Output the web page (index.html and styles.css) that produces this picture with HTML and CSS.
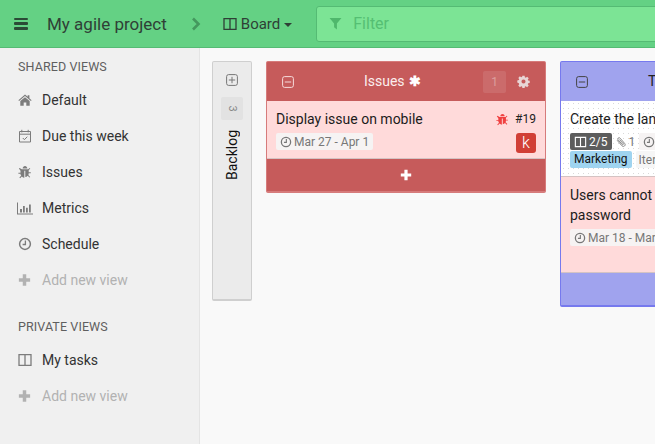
FILE: index.html
```html
<!DOCTYPE html>
<html lang="en">
<head>
<meta charset="utf-8">
<title>My agile project</title>
<link rel="stylesheet" href="styles.css">
</head>
<body>
<svg class="defs" width="0" height="0" aria-hidden="true">
  <symbol id="i-board" viewBox="0 0 14 14"><path fill="none" stroke="currentColor" stroke-width="1.3" d="M1 1.650h12v10.700H1zM7 1.650v10.700"/></symbol>
  <symbol id="i-home" viewBox="0 0 14 14"><path fill="currentColor" d="M7 1.600 .4 7.200l.7.8L7 3.100 12.900 8l.7-.8-2.200-1.900V2.200H9.700v1.600zM2.300 8.100v4.600h3.400V9.600h2.600v3.100h3.400V8.100L7 4.300z"/></symbol>
  <symbol id="i-cal" viewBox="0 0 14 14"><path fill="none" stroke="currentColor" d="M1.500 2.500h11v10.500h-11zM1.500 5.200h11M3.800.8v2.600M10.200.8v2.600M4.800 9l1.600 1.700 2.900-3"/></symbol>
  <symbol id="i-bug" viewBox="0 0 14 14"><path fill="currentColor" d="M4.600 3.400C4.800 1.900 5.800 1 7 1s2.200.9 2.400 2.400zM3.800 4.300h6.400l1.400-1.400.7.7-1.600 1.600v2h2.100v1h-2.100c0 .7-.1 1.300-.4 1.800l1.900 1.900-.7.7-1.800-1.800c-.7.8-1.500 1.200-2.400 1.300V5.800H6.300v6.900c-.9-.1-1.700-.5-2.400-1.300l-1.800 1.800-.7-.7 1.900-1.900C2.600 10 2.500 9.400 2.500 8.700H.4v-1h2.100v-2L.9 3.600l.7-.7z"/></symbol>
  <symbol id="i-chart" viewBox="0 0 16 14"><path fill="currentColor" d="M0 1.500h1v10.900h15v1H0zM3 8h2v3.500H3zM6 5h1.800v6.500H6zM9 6.800h1.800v4.700H9zM12 3.500h1.800v8H12z"/></symbol>
  <symbol id="i-clock" viewBox="0 0 14 14"><circle cx="7" cy="7" r="5.400" fill="none" stroke="currentColor" stroke-width="1.500"/><path fill="none" stroke="currentColor" stroke-width="1.300" d="M7.400 3.600v3.900H4.600"/></symbol>
  <symbol id="i-plus" viewBox="0 0 12 12"><path fill="currentColor" d="M4.400.8h3.200v3.600h3.600v3.200H7.600v3.600H4.400V7.600H.8V4.400h3.600z"/></symbol>
  <symbol id="i-box-minus" viewBox="0 0 12 12"><rect x=".6" y=".6" width="10.800" height="10.800" rx="2" fill="none" stroke="currentColor"/><path stroke="currentColor" d="M2.800 6h6.400"/></symbol>
  <symbol id="i-box-plus" viewBox="0 0 12 12"><rect x=".6" y=".6" width="10.800" height="10.800" rx="2" fill="none" stroke="currentColor"/><path stroke="currentColor" d="M2.800 6h6.400M6 2.800v6.400"/></symbol>
  <symbol id="i-gear" viewBox="0 0 14 14"><path fill="currentColor" fill-rule="evenodd" d="M5.800.8h2.400l.3 1.700 1 .4 1.400-1 1.700 1.700-1 1.400.4 1 1.700.3v2.400l-1.700.3-.4 1 1 1.400-1.700 1.700-1.400-1-1 .4-.3 1.700H5.800l-.3-1.700-1-.4-1.400 1-1.700-1.700 1-1.400-.4-1L.3 8.200V5.800L2 5.500l.4-1-1-1.400L3.100 1.400l1.400 1 1-.4zM7 4.800a2.200 2.200 0 1 0 0 4.400 2.200 2.200 0 0 0 0-4.400z"/></symbol>
  <symbol id="i-clip" viewBox="0 0 14 14"><path fill="none" stroke="currentColor" stroke-width="1.200" d="M1.500 4.500l6.800 7.800c1 1.100 2.500 1.200 3.600.3s1.200-2.400.3-3.500L5.700 1.600C5 .8 3.900.7 3.100 1.400s-.8 1.700-.2 2.500l5.800 6.600c.4.400.9.500 1.300.1s.4-.9 0-1.300L5 3.600"/></symbol>
</svg>

<header class="topbar">
  <button class="menu-btn" type="button" aria-label="Menu"><span></span><span></span><span></span></button>
  <h1 class="project">My agile project</h1>
  <svg class="crumb" viewBox="0 0 10 14" aria-hidden="true"><path d="M2 1.500 7.500 7 2 12.500" fill="none" stroke="currentColor" stroke-width="2.600"/></svg>
  <div class="view-switch">
    <svg class="ico-board"><use href="#i-board"/></svg>
    <span>Board</span>
    <i class="caret"></i>
  </div>
  <div class="filter">
    <svg class="filter-ico" viewBox="0 0 12 12" aria-hidden="true"><path fill="currentColor" d="M.5 1h11L7.300 6v5.500L4.700 9.500V6z"/></svg>
    <span>Filter</span>
  </div>
</header>

<div class="app">
  <nav class="sidebar">
    <h2 class="side-title">SHARED VIEWS</h2>
    <a class="side-item"><svg class="side-ico"><use href="#i-home"/></svg>Default</a>
    <a class="side-item"><svg class="side-ico"><use href="#i-cal"/></svg>Due this week</a>
    <a class="side-item"><svg class="side-ico"><use href="#i-bug"/></svg>Issues</a>
    <a class="side-item"><svg class="side-ico wide"><use href="#i-chart"/></svg>Metrics</a>
    <a class="side-item"><svg class="side-ico"><use href="#i-clock"/></svg>Schedule</a>
    <a class="side-item muted"><svg class="side-ico small"><use href="#i-plus"/></svg>Add new view</a>
    <h2 class="side-title second">PRIVATE VIEWS</h2>
    <a class="side-item"><svg class="side-ico"><use href="#i-board"/></svg>My tasks</a>
    <a class="side-item muted"><svg class="side-ico small"><use href="#i-plus"/></svg>Add new view</a>
  </nav>

  <main class="board">
    <section class="collapsed">
      <svg class="collapsed-ico"><use href="#i-box-plus"/></svg>
      <div class="collapsed-count"><span>3</span></div>
      <div class="collapsed-name">Backlog</div>
    </section>

    <section class="column red">
      <div class="col-head">
        <svg class="head-ico"><use href="#i-box-minus"/></svg>
        <div class="col-title">Issues <span class="star">✱</span></div>
        <span class="col-count">1</span>
        <svg class="gear"><use href="#i-gear"/></svg>
      </div>
      <article class="card pink short">
        <div class="card-line">
          <span class="card-title">Display issue on mobile</span>
          <svg class="bug"><use href="#i-bug"/></svg>
          <span class="card-num">#19</span>
        </div>
        <div class="card-line meta">
          <span class="chip"><svg class="chip-ico"><use href="#i-clock"/></svg>Mar 27 - Apr 1</span>
          <span class="avatar">k</span>
        </div>
      </article>
      <div class="col-foot"><svg class="foot-plus"><use href="#i-plus"/></svg></div>
    </section>

    <section class="column blue">
      <div class="col-head">
        <svg class="head-ico"><use href="#i-box-minus"/></svg>
        <div class="col-title">To be tested</div>
        <span class="col-count">2</span>
        <svg class="gear"><use href="#i-gear"/></svg>
      </div>
      <article class="card dotted">
        <div class="card-title">Create the landing page</div>
        <div class="tags">
          <span class="progress"><svg class="chip-ico"><use href="#i-board"/></svg>2/5</span>
          <span class="clip"><svg class="clip-ico"><use href="#i-clip"/></svg>1</span>
          <span class="chip"><svg class="chip-ico"><use href="#i-clock"/></svg>Mar 20 - Mar 24</span>
        </div>
        <div class="tags second-row">
          <span class="label">Marketing</span>
          <span class="chip plain">Iteration 3</span>
        </div>
      </article>
      <article class="card pink tall">
        <div class="card-title">Users cannot reset their<br>password</div>
        <div class="tags">
          <span class="chip"><svg class="chip-ico"><use href="#i-clock"/></svg>Mar 18 - Mar 22</span>
        </div>
      </article>
      <div class="col-foot"></div>
    </section>
  </main>
</div>
</body>
</html>
```

FILE: styles.css
```css
* { box-sizing: border-box; }
html, body { margin: 0; height: 100%; overflow: hidden; }
body {
  font-family: Roboto, "Liberation Sans", sans-serif;
  font-size: 14px;
  color: #222;
  background: #f9f9f9;
  display: flex;
  flex-direction: column;
}
.defs { position: absolute; }

.topbar {
  flex: 0 0 48px;
  display: flex;
  align-items: center;
  background: #64d184;
  border-bottom: 1px solid #55bb74;
  color: #333;
}
.menu-btn {
  width: 14px;
  height: 12px;
  margin: 0 0 0 14px;
  padding: 0;
  border: 0;
  background: none;
  display: flex;
  flex-direction: column;
  justify-content: space-between;
}
.menu-btn span { display: block; height: 2.500px; background: #2b4a36; border-radius: 1px; }
.project {
  margin: 0 0 0 19px;
  font-size: 17px;
  font-weight: 400;
  color: #2f3f36;
  white-space: nowrap;
}
.crumb { width: 10px; height: 14px; margin-left: 24px; color: #44985e; }
.view-switch { display: flex; align-items: center; margin-left: 22px; color: #2f3f36; font-size: 15px; }
.ico-board { width: 14px; height: 14px; margin-right: 4px; }
.caret {
  width: 0; height: 0; margin-left: 4px; margin-top: 2px;
  border-left: 4px solid transparent;
  border-right: 4px solid transparent;
  border-top: 4px solid #2f3f36;
}
.filter {
  flex: 1;
  height: 36px;
  margin-left: 24px;
  margin-right: -10px;
  padding-left: 12px;
  display: flex;
  align-items: center;
  background: #7ce495;
  border: 1px solid #55bb74;
  border-radius: 3px;
  color: #55bf73;
  font-size: 16px;
}
.filter-ico { width: 13px; height: 13px; margin-right: 11px; color: #4fb76c; }

.app { flex: 1; display: flex; min-height: 0; }
.sidebar {
  flex: 0 0 200px;
  background: #f0f0f0;
  border-right: 1px solid #e4e4e4;
  padding-top: 11px;
}
.side-title {
  margin: 0;
  padding-left: 18px;
  font-size: 12.500px;
  line-height: 15px;
  font-weight: 400;
  color: #5f5f5f;
  letter-spacing: .1px;
}
.side-title.second { margin-top: 21px; }
.side-item {
  height: 36px;
  display: flex;
  align-items: center;
  padding-left: 42px;
  position: relative;
  color: #333;
}
.side-title + .side-item { margin-top: 8px; }
.side-item.muted { color: #b2b2b2; }
.side-ico {
  position: absolute;
  left: 18px;
  top: 11px;
  width: 14px;
  height: 14px;
  color: #7c7c7c;
}
.side-ico.wide { left: 17px; width: 16px; }
.side-ico.small { color: #b2b2b2; width: 13px; }

.board {
  flex: 1;
  min-width: 0;
  display: flex;
  align-items: flex-start;
  gap: 14px;
  padding: 13px 0 0 12px;
  overflow: hidden;
}
.collapsed {
  flex: 0 0 40px;
  height: 240px;
  background: #ebebeb;
  border: 1px solid #cfcfcf;
  border-bottom-width: 2px;
  border-radius: 2px;
  display: flex;
  flex-direction: column;
  align-items: center;
  padding-top: 12px;
}
.collapsed-ico { width: 12px; height: 12px; color: #777; }
.collapsed-count {
  width: 22px;
  height: 23px;
  margin-top: 11px;
  background: #e2e2e2;
  border-radius: 2px;
  display: flex;
  align-items: center;
  justify-content: center;
  color: #888;
  font-size: 11px;
}
.collapsed-count span { transform: rotate(90deg); }
.collapsed-name {
  margin-top: 10px;
  writing-mode: vertical-rl;
  transform: rotate(180deg);
  color: #111;
  font-size: 14px;
  line-height: 18px;
}

.column {
  flex: 0 0 280px;
  border-radius: 2px;
  border-style: solid;
  border-width: 1px 1px 2px 1px;
}
.column.red { background: #c65b5b; border-color: #d67b7b; }
.column.blue { background: #a0a3ee; border-color: #7679ee; }
.col-head {
  height: 39px;
  display: flex;
  align-items: center;
  padding: 0 15px;
}
.red .col-head { color: #fff; }
.blue .col-head { color: #222; }
.head-ico { flex: 0 0 12px; width: 12px; height: 12px; }
.red .head-ico { color: #f6dcdc; }
.blue .head-ico { color: #444; }
.col-title { flex: 1; text-align: center; white-space: nowrap; padding-left: 8px; line-height: 38px; height: 38px; margin-top: -1px; }
.red .col-title { color: #fbeeee; }
.star { font-size: 14px; font-weight: 700; color: #fff; margin-left: 1px; }
.col-count {
  width: 23px;
  height: 22px;
  margin-right: 11px;
  border-radius: 2px;
  display: flex;
  align-items: center;
  justify-content: center;
  font-size: 12px;
  background: rgba(255,255,255,.1);
  color: rgba(255,255,255,.35);
}
.gear { width: 13px; height: 13px; color: #e8d5d5; }
.blue .gear { color: #555; }

.card { padding: 8px 9px 8px; border-bottom: 1px solid #d5c3c3; }
.card.pink { background: #ffdada; }
.card.short { height: 58px; }
.card.dotted {
  background: #fff radial-gradient(circle, #d9d9d9 .6px, transparent .8px) 0 0 / 5px 5px;
  height: 76px;
}
.card.tall { height: 96px; }
.card-line { display: flex; align-items: center; }
.card-title { flex: 1; line-height: 20px; color: #1c1c1c; }
.bug { width: 13px; height: 13px; margin-right: 6px; color: #f04040; }
.card-num { font-size: 12px; color: #222; }
.meta { justify-content: space-between; align-items: flex-start; margin-top: 4px; }
.chip {
  display: inline-flex;
  align-items: center;
  height: 17px;
  padding: 0 4px;
  background: #f6f3f3;
  border-radius: 2px;
  color: #777;
  font-size: 12px;
  white-space: nowrap;
}
.chip.plain { background: #f6f6f6; padding: 0 3px; }
.chip-ico { width: 12px; height: 12px; margin-right: 2px; }
.clip-ico { width: 10px; height: 12px; margin-right: 2px; }
.avatar {
  width: 20px;
  height: 20px;
  border-radius: 3px;
  background: #d13f36;
  color: #fff;
  font-size: 16px;
  font-weight: 300;
  line-height: 19px;
  text-align: center;
}
.tags { display: flex; align-items: center; gap: 4px; white-space: nowrap; margin-top: 4px; }
.tags.second-row { margin-top: 1px; }
.progress {
  display: inline-flex;
  align-items: center;
  height: 17px;
  padding: 0 5px 0 4px;
  background: #5d5d5d;
  color: #fff;
  border-radius: 2px;
  font-size: 12px;
}
.progress .chip-ico { width: 13px; }
.clip { display: inline-flex; align-items: center; color: #777; font-size: 12px; }
.label {
  height: 17px;
  line-height: 17px;
  padding: 0 4px;
  background: #9fd4f0;
  border-radius: 2px;
  font-size: 12px;
  color: #111;
}
.col-foot {
  height: 32px;
  display: flex;
  align-items: center;
  justify-content: center;
}
.foot-plus { width: 12px; height: 12px; color: #fff; }
```
